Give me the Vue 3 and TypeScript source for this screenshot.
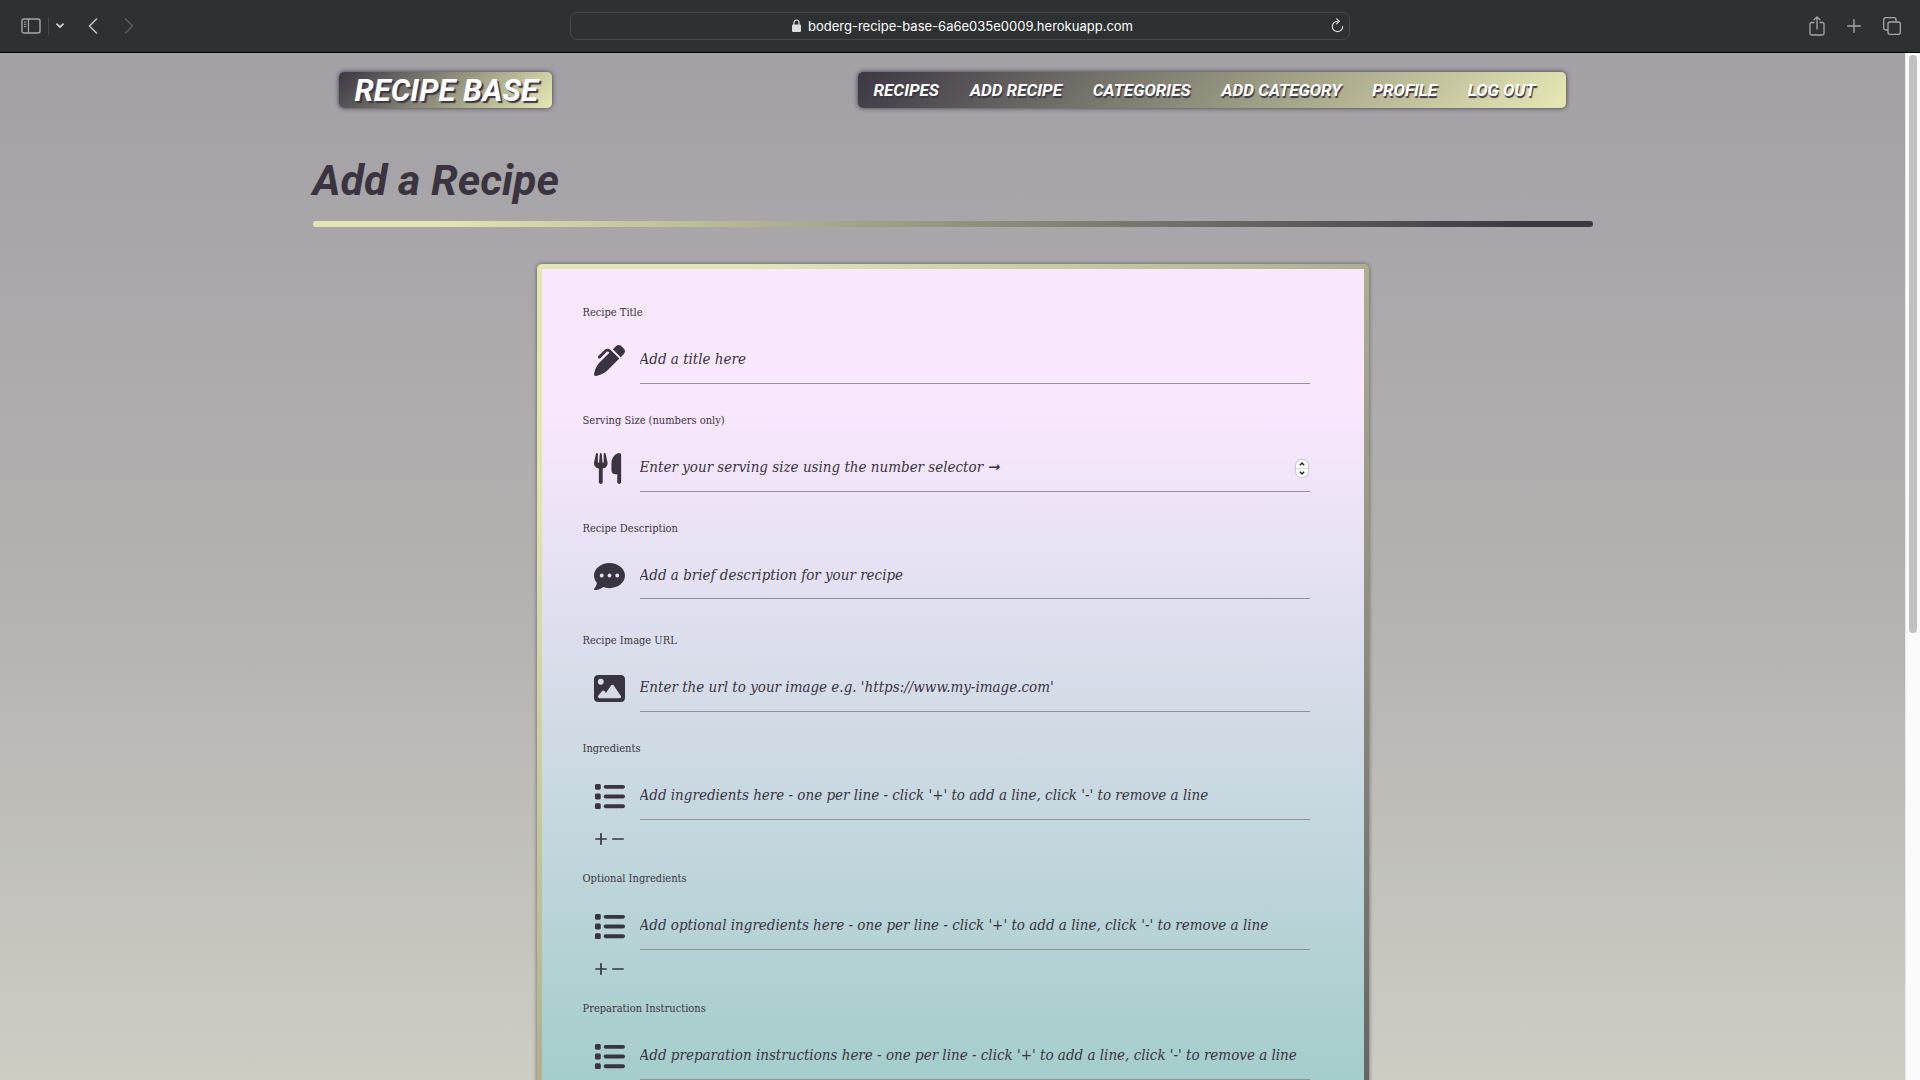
<script setup lang="ts">
import { ref } from 'vue'

interface Icon {
  box: string
  path: string
}

interface Field {
  id: string
  label: string
  placeholder: string
  icon: string
  kind: 'text' | 'number' | 'textarea' | 'url'
  repeatable?: boolean
}

const icons: Record<string, Icon> = {
  pen: {
    box: '0 0 512 512',
    path: 'M453.3 19.3l39.4 39.4c25 25 25 65.5 0 90.5l-52 52L310.7 71.4l52.1-52.1c25-25 65.5-25 90.5 0zM241 115c-9.4-9.4-24.6-9.4-33.9 0L105 217c-9.4 9.4-24.6 9.4-33.9 0s-9.4-24.6 0-33.9L173 81c28-28 73.7-28 102 0l13 13L418 224 229 412c-48 48-109 80-176 94l-24 5c-8 1.6-16-1-22-6.6s-8-14-6.6-22l5-24c13-67 46-128 94-176L254 128z',
  },
  utensils: {
    box: '0 0 448 512',
    path: 'M416 0C400 0 288 32 288 176V288c0 35.3 28.7 64 64 64h32V480c0 17.7 14.3 32 32 32s32-14.3 32-32V352 240 32c0-17.7-14.3-32-32-32zM64 16C64 7.8 57.9 1 49.7 .1S34.2 4.6 32.4 12.5L2.1 148.8C.7 155.1 0 161.5 0 167.9c0 45.9 35.1 83.6 80 87.7V480c0 17.7 14.3 32 32 32s32-14.3 32-32V255.6c44.9-4.1 80-41.8 80-87.7c0-6.4-.7-12.8-2.1-19.1L191.6 12.5c-1.8-8-9.3-13.3-17.4-12.4S160 7.8 160 16V150.2c0 5.4-4.4 9.8-9.8 9.8c-5.1 0-9.3-3.9-9.8-9L127.9 14.6C127.2 6.3 120.3 0 112 0s-15.2 6.3-15.9 14.6L83.7 151c-.5 5.1-4.7 9-9.8 9c-5.4 0-9.8-4.4-9.8-9.8V16z',
  },
  comment: {
    box: '0 0 512 512',
    path: 'M256 448c141.4 0 256-93.1 256-208S397.4 32 256 32S0 125.1 0 240c0 45.1 17.7 86.8 47.7 120.9c-1.9 24.5-11.4 46.3-21.4 62.9c-5.5 9.2-11.1 16.6-15.2 21.6c-2.1 2.5-3.7 4.4-4.9 5.7c-.6 .6-1 1.1-1.3 1.4l-.3 .3c-4.6 4.6-5.9 11.4-3.4 17.4c2.5 6 8.3 9.9 14.8 9.9c28.7 0 57.6-8.9 81.6-19.3c22.9-10 42.4-21.9 54.3-30.6c31.8 11.5 67 17.9 104.1 17.9zM128 208a32 32 0 1 1 0 64 32 32 0 1 1 0-64zm128 0a32 32 0 1 1 0 64 32 32 0 1 1 0-64zm96 32a32 32 0 1 1 64 0 32 32 0 1 1 -64 0z',
  },
  image: {
    box: '0 0 512 512',
    path: 'M0 96C0 60.7 28.7 32 64 32H448c35.3 0 64 28.7 64 64V416c0 35.3-28.7 64-64 64H64c-35.3 0-64-28.7-64-64V96zM323.8 202.5c-4.5-6.6-11.9-10.5-19.8-10.5s-15.4 3.9-19.8 10.5l-87 127.6L170.7 297c-4.6-5.7-11.5-9-18.7-9s-14.2 3.3-18.7 9l-64 80c-5.8 7.2-6.9 17.1-2.9 25.4s12.4 13.6 21.6 13.6h96 32H424c8.9 0 17.1-4.9 21.2-12.8s3.6-17.4-1.4-24.7l-120-176zM112 192a48 48 0 1 0 0-96 48 48 0 1 0 0 96z',
  },
  list: {
    box: '0 0 512 512',
    path: 'M40 48C26.7 48 16 58.7 16 72v48c0 13.3 10.7 24 24 24H88c13.3 0 24-10.7 24-24V72c0-13.3-10.7-24-24-24H40zM192 64c-17.7 0-32 14.3-32 32s14.3 32 32 32H480c17.7 0 32-14.3 32-32s-14.3-32-32-32H192zm0 160c-17.7 0-32 14.3-32 32s14.3 32 32 32H480c17.7 0 32-14.3 32-32s-14.3-32-32-32H192zm0 160c-17.7 0-32 14.3-32 32s14.3 32 32 32H480c17.7 0 32-14.3 32-32s-14.3-32-32-32H192zM16 232v48c0 13.3 10.7 24 24 24H88c13.3 0 24-10.7 24-24V232c0-13.3-10.7-24-24-24H40c-13.3 0-24 10.7-24 24zM40 368c-13.3 0-24 10.7-24 24v48c0 13.3 10.7 24 24 24H88c13.3 0 24-10.7 24-24V392c0-13.3-10.7-24-24-24H40z',
  },
}

const links = ['Recipes', 'Add Recipe', 'Categories', 'Add Category', 'Profile', 'Log Out']

const fields: Field[] = [
  { id: 'title', label: 'Recipe Title', placeholder: 'Add a title here', icon: 'pen', kind: 'text' },
  { id: 'servings', label: 'Serving Size (numbers only)', placeholder: 'Enter your serving size using the number selector ➞', icon: 'utensils', kind: 'number' },
  { id: 'description', label: 'Recipe Description', placeholder: 'Add a brief description for your recipe', icon: 'comment', kind: 'textarea' },
  { id: 'image', label: 'Recipe Image URL', placeholder: "Enter the url to your image e.g. 'https://www.my-image.com'", icon: 'image', kind: 'url' },
  { id: 'ingredients', label: 'Ingredients', placeholder: "Add ingredients here - one per line - click '+' to add a line, click '-' to remove a line", icon: 'list', kind: 'text', repeatable: true },
  { id: 'optional', label: 'Optional Ingredients', placeholder: "Add optional ingredients here - one per line - click '+' to add a line, click '-' to remove a line", icon: 'list', kind: 'text', repeatable: true },
  { id: 'preparation', label: 'Preparation Instructions', placeholder: "Add preparation instructions here - one per line - click '+' to add a line, click '-' to remove a line", icon: 'list', kind: 'text', repeatable: true },
]

const values = ref<Record<string, string>>({})

function step(id: string, by: number) {
  values.value[id] = String(Math.max(1, Number(values.value[id] || 0) + by))
}
</script>

<template>
  <div class="window">
    <div class="toolbar">
      <div class="tools tools-start">
        <button type="button" class="tool" aria-label="Sidebar">
          <svg width="20" height="16" viewBox="0 0 20 16" fill="none" stroke="currentColor">
            <rect x="1" y="1" width="18" height="14" rx="2" stroke-width="1.4" />
            <path d="M7.5 1v14" stroke-width="1.2" />
            <path d="M3 4h2.5M3 6.3h2.5M3 8.6h2.5" />
          </svg>
        </button>
        <span class="divider"></span>
        <button type="button" class="tool tool-menu" aria-label="Tab groups">
          <svg width="8" height="6" viewBox="0 0 8 6" fill="none" stroke="currentColor" stroke-width="1.7" stroke-linecap="round" stroke-linejoin="round"><path d="M1 1.2l3 3 3-3" /></svg>
        </button>
        <button type="button" class="tool tool-back" aria-label="Back">
          <svg width="10" height="16" viewBox="0 0 10 16" fill="none" stroke="currentColor" stroke-width="1.6" stroke-linecap="round" stroke-linejoin="round"><path d="M8.5 1L1.5 8l7 7" /></svg>
        </button>
        <button type="button" class="tool tool-forward" aria-label="Forward">
          <svg width="10" height="16" viewBox="0 0 10 16" fill="none" stroke="currentColor" stroke-width="1.6" stroke-linecap="round" stroke-linejoin="round"><path d="M1.5 1l7 7-7 7" /></svg>
        </button>
      </div>
      <div class="address">
        <span class="address-text">
          <svg width="9" height="13" viewBox="0 0 9 13">
            <rect x="0" y="5.5" width="9" height="7.5" rx="1.2" fill="#dcdede" />
            <path d="M2 6V3.5a2.5 2.5 0 0 1 5 0V6" fill="none" stroke="#dcdede" stroke-width="1.2" />
          </svg>
          boderg-recipe-base-6a6e035e0009.herokuapp.com
        </span>
        <button type="button" class="tool" aria-label="Reload">
          <svg width="13" height="15" viewBox="0 0 13 15" fill="none" stroke="currentColor" stroke-width="1.2" stroke-linecap="round" stroke-linejoin="round">
            <path d="M6.5 3.3a5.2 5.2 0 1 0 5.2 5.2" />
            <path d="M5.5 .8l2.8 2.5-2.8 2.6" />
          </svg>
        </button>
      </div>
      <div class="tools tools-end">
        <button type="button" class="tool" aria-label="Share">
          <svg width="16" height="20" viewBox="0 0 16 20" fill="none" stroke="currentColor" stroke-width="1.3" stroke-linecap="round" stroke-linejoin="round">
            <path d="M5 6.5H2.5A1.5 1.5 0 0 0 1 8v9.5A1.5 1.5 0 0 0 2.5 19h11a1.5 1.5 0 0 0 1.5-1.5V8a1.5 1.5 0 0 0-1.5-1.5H11" />
            <path d="M8 13V1M5 3.8L8 1l3 2.8" />
          </svg>
        </button>
        <button type="button" class="tool" aria-label="New tab">
          <svg width="14" height="14" viewBox="0 0 14 14" fill="none" stroke="currentColor" stroke-width="1.4" stroke-linecap="round"><path d="M7 .7v12.6M.7 7h12.6" /></svg>
        </button>
        <button type="button" class="tool" aria-label="Tab overview">
          <svg width="18" height="18" viewBox="0 0 18 18" fill="none" stroke="currentColor" stroke-width="1.3" stroke-linejoin="round">
            <rect x="5" y="5" width="12.3" height="12.3" rx="2" />
            <path d="M5 13H2.7a2 2 0 0 1-2-2V2.7a2 2 0 0 1 2-2H11a2 2 0 0 1 2 2V5" />
          </svg>
        </button>
      </div>
    </div>

    <div class="viewport">
      <div class="page">
        <header class="header">
          <a class="logo" href="#">RECIPE BASE</a>
          <nav class="nav">
            <a v-for="link in links" :key="link" href="#">{{ link.toUpperCase() }}</a>
          </nav>
        </header>

        <main class="main">
          <h1>Add a Recipe</h1>
          <div class="rule"></div>
          <div class="card">
            <form class="form" @submit.prevent>
              <div v-for="f in fields" :key="f.id" class="field" :class="{ long: f.kind === 'textarea', repeatable: f.repeatable }">
                <label :for="f.id">{{ f.label }}</label>
                <div class="entry">
                  <svg class="icon" :viewBox="icons[f.icon].box" preserveAspectRatio="xMinYMid meet"><path :d="icons[f.icon].path" /></svg>
                  <div class="line">
                    <textarea v-if="f.kind === 'textarea'" :id="f.id" v-model="values[f.id]" rows="1" :placeholder="f.placeholder"></textarea>
                    <input v-else :id="f.id" v-model="values[f.id]" :type="f.kind" :placeholder="f.placeholder" />
                    <span v-if="f.kind === 'number'" class="stepper">
                      <button type="button" aria-label="Increase" @click="step(f.id, 1)">
                        <svg width="6" height="4" viewBox="0 0 6 4"><path d="M.8 3.3L3 1l2.2 2.3" /></svg>
                      </button>
                      <button type="button" aria-label="Decrease" @click="step(f.id, -1)">
                        <svg width="6" height="4" viewBox="0 0 6 4"><path d="M.8 .7L3 3l2.2-2.3" /></svg>
                      </button>
                    </span>
                  </div>
                </div>
                <div v-if="f.repeatable" class="controls">
                  <button type="button" aria-label="Add a line">
                    <svg width="12" height="12" viewBox="0 0 12 12"><path d="M6 .8v10.4M.8 6h10.4" /></svg>
                  </button>
                  <button type="button" aria-label="Remove a line">
                    <svg width="12" height="12" viewBox="0 0 12 12"><path d="M.8 6h10.4" /></svg>
                  </button>
                </div>
              </div>
            </form>
          </div>
        </main>
      </div>
      <div class="scrollbar"><div class="thumb"></div></div>
    </div>
  </div>
</template>

<style>
body {
  background: #2e3132;
}
</style>

<style scoped>
* {
  box-sizing: border-box;
}

.window {
  display: flex;
  flex-direction: column;
  height: 100vh;
  overflow: hidden;
  color: #3a3440;
}

button {
  display: flex;
  align-items: center;
  justify-content: center;
  padding: 0;
  border: 0;
  background: none;
  color: inherit;
}

/* Browser toolbar */
.toolbar {
  flex: none;
  display: grid;
  grid-template-columns: 1fr 780px 1fr;
  align-items: center;
  height: 53px;
  padding: 0 19px 1px;
  border-bottom: 1px solid #000;
  background: #2e3132;
  color: #a5a8a8;
}

.tools {
  display: flex;
  align-items: center;
}

.tools-start {
  padding-left: 2px;
}

.tools-end {
  justify-content: flex-end;
  gap: 22px;
}

.divider {
  width: 1px;
  height: 18px;
  margin: 0 7px;
  background: #45494a;
}

.tool-menu {
  color: #d5d7d7;
}

.tool-back {
  margin-left: 24px;
  color: #c0c3c3;
}

.tool-forward {
  margin-left: 26px;
  color: #585c5d;
}

.address {
  display: flex;
  align-items: center;
  height: 28px;
  padding: 0 5px 0 23px;
  border: 1px solid #464a4b;
  border-radius: 7px;
  color: #d5d7d7;
}

.address-text {
  flex: 1;
  display: flex;
  align-items: center;
  justify-content: center;
  gap: 7px;
  color: #fff;
  font: 400 13px Inter, sans-serif;
}

/* Page */
.viewport {
  flex: 1;
  display: flex;
  min-height: 0;
  overflow: hidden;
  background: linear-gradient(180deg, #a3a0a6 0%, #aaa8aa 22%, #b4b3b1 55%, #cdcdc4 100%);
}

.page {
  flex: 1;
  min-width: 0;
}

.scrollbar {
  width: 15px;
  padding: 2px 3px;
  border-left: 1px solid #e8e8e8;
  background: #fafafa;
}

.thumb {
  width: 8px;
  height: 56.5%;
  border-radius: 4px;
  background: #c1c1c1;
}

.header {
  display: flex;
  justify-content: space-between;
  max-width: 1280px;
  margin: 0 auto;
  padding: 19px 27px 0 26px;
  font-family: Roboto, sans-serif;
  font-style: italic;
  font-weight: 700;
}

.header a {
  color: #fff;
  text-decoration: none;
}

.logo,
.nav {
  display: flex;
  align-items: center;
  height: 36px;
  border-radius: 5px;
  background: linear-gradient(135deg, #3c3744, #e3e5b3 98%);
  box-shadow: 0 0 5px #3c3744;
}

.logo {
  width: 213px;
  padding-left: 16px;
  font-size: 31px;
  text-shadow: 2px 2px 1px #3c3744;
}

.nav {
  justify-content: space-between;
  width: 708px;
  padding: 0 30px 0 16px;
  font-size: 17px;
  text-shadow: 1px 2px 1px #3c3744;
}

.main {
  max-width: 1280px;
  margin: 0 auto;
}

h1 {
  margin: 0;
  padding: 42px 0 11px;
  font: italic 700 43px/60px Roboto, sans-serif;
}

.rule {
  height: 6px;
  border-radius: 3px;
  background: linear-gradient(90deg, #e3e5b3 10%, #3c3744 95%);
}

.card {
  width: 65%;
  margin: 37px auto 0;
  padding: 5px;
  border-radius: 5px;
  background: linear-gradient(135deg, #e3e5b3 13%, #3c3744 125%);
  box-shadow: 0 0 4px rgba(60, 55, 68, 0.7);
}

.form {
  padding: 31px 54px 24px 41px;
  background: linear-gradient(180deg, #f9e7fe 16%, #a4cdcb 92%);
  font-family: "DejaVu Serif Condensed", "DejaVu Serif", serif;
}

.field {
  margin-bottom: 24px;
}

.field.long {
  margin-bottom: 29px;
}

.field.repeatable {
  margin-bottom: 20px;
}

label {
  display: block;
  padding-top: 3px;
  font-size: 11px;
  line-height: 20px;
}

.entry {
  display: flex;
  align-items: center;
  margin-top: 15px;
}

.icon {
  flex: none;
  width: 31px;
  height: 31px;
  margin: 0 15px 1px 11px;
  fill: #3a3440;
}

.line {
  flex: 1;
  display: flex;
  align-items: center;
  height: 46px;
  border-bottom: 1px solid #929292;
}

.long .line {
  height: 45px;
}

input,
textarea {
  flex: 1;
  min-width: 0;
  height: 40px;
  padding: 0 0 4px;
  border: 0;
  outline: 0;
  background: none;
  color: #3a3440;
  font: italic 15px/36px "DejaVu Serif Condensed", "DejaVu Serif", serif;
  resize: none;
  overflow: hidden;
  appearance: none;
}

textarea {
  line-height: 38px;
}

input[type='number'] {
  appearance: textfield;
}

input::placeholder,
textarea::placeholder {
  color: #3a3440;
  opacity: 1;
}

.stepper {
  display: flex;
  flex-direction: column;
  gap: 1px;
  width: 12px;
  height: 17px;
  margin-right: 2px;
  overflow: hidden;
  border-radius: 6px;
  background: #ddd;
  box-shadow: 0 0 1px 1px #c9c2cf;
}

.stepper button {
  flex: 1;
  background: #fff;
}

.stepper path {
  fill: none;
  stroke: #222;
  stroke-width: 1.4;
}

.controls {
  display: flex;
  gap: 5px;
  height: 14px;
  margin: 12px 0 0 12px;
}

.controls path {
  fill: none;
  stroke: #3a3440;
  stroke-width: 1.7;
  stroke-linecap: round;
}
</style>
